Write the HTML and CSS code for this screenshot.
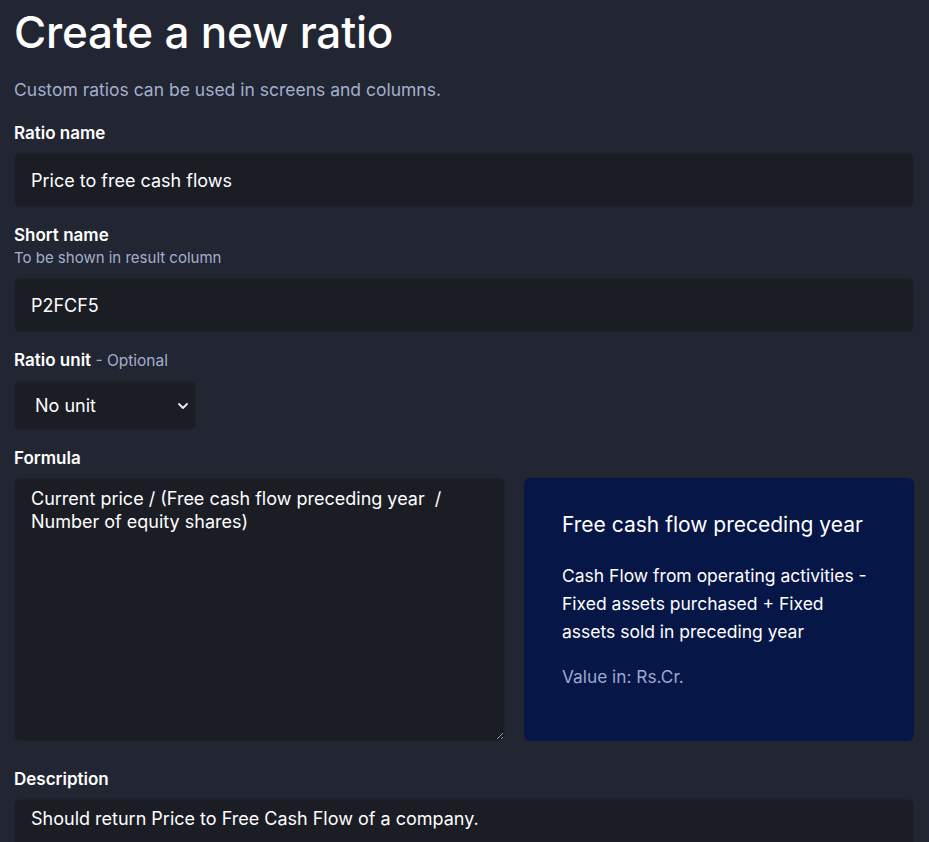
FILE: index.html
```html
<!DOCTYPE html>
<html lang="en">
<head>
<meta charset="utf-8">
<title>Create a new ratio</title>
<link rel="stylesheet" href="styles.css">
</head>
<body>
<main class="page">
  <h1 class="title">Create a new ratio</h1>
  <p class="subtitle">Custom ratios can be used in screens and columns.</p>

  <div class="field first">
    <label class="label" for="rname">Ratio name</label>
    <input class="input" id="rname" type="text" value="Price to free cash flows">
  </div>

  <div class="field">
    <label class="label" for="sname">Short name</label>
    <div class="help">To be shown in result column</div>
    <input class="input" id="sname" type="text" value="P2FCF5">
  </div>

  <div class="field">
    <label class="label" for="unit">Ratio unit <span class="optional">- Optional</span></label>
    <div class="select" id="unit">
      <span class="select-value">No unit</span>
      <svg class="chevron" width="10" height="6" viewBox="0 0 10 6"><path d="M1 1l4 4 4-4" fill="none" stroke="#e8eaf0" stroke-width="1.8" stroke-linecap="round" stroke-linejoin="round"/></svg>
    </div>
  </div>

  <div class="field">
    <label class="label" for="formula">Formula</label>
    <div class="formula-row">
      <textarea class="textarea" id="formula">Current price / (Free cash flow preceding year  /
Number of equity shares)</textarea>
      <aside class="card">
        <h2 class="card-title">Free cash flow preceding year</h2>
        <p class="card-text">Cash Flow from operating activities - Fixed assets purchased + Fixed assets sold in preceding year</p>
        <p class="card-unit">Value in: Rs.Cr.</p>
      </aside>
    </div>
  </div>

  <div class="field desc-field">
    <label class="label" for="desc">Description</label>
    <div class="desc" id="desc">Should return Price to Free Cash Flow of a company.</div>
  </div>
</main>
</body>
</html>
```
FILE: styles.css
```css
* { box-sizing: border-box; }
html, body {
  margin: 0;
  background: #222532;
  height: 100%;
  overflow: hidden;
}
body {
  font-family: Inter, "Noto Sans", sans-serif;
  color: #ffffff;
}
.page {
  padding: 0 15px 0 14px;
}
.title {
  margin: 0;
  padding-top: 5px;
  font-size: 44px;
  font-weight: 500;
  line-height: 54px;
  letter-spacing: -0.2px;
}
.subtitle {
  margin: 20px 0 0;
  font-size: 17.5px;
  line-height: 22px;
  color: #a4afcf;
}
.field {
  margin-top: 16px;
}
.field.first { margin-top: 20px; }
.field.desc-field { margin-top: 26px; }
.label {
  display: block;
  font-size: 17px;
  font-weight: 600;
  line-height: 24px;
  margin-bottom: 8px;
}
.help {
  font-size: 15px;
  color: #a4afcf;
  line-height: 20px;
  margin-top: -7px;
  margin-bottom: 10px;
}
.optional {
  font-weight: 400;
  font-size: 15.5px;
  color: #a4afcf;
}
.input {
  display: block;
  width: 100%;
  height: 54px;
  background: #1b1d25;
  border: 1px solid #1f222b;
  border-radius: 6px;
  color: #ffffff;
  font-family: inherit;
  font-size: 18px;
  padding: 0 16px;
  outline: none;
}
.desc {
  height: 60px;
  background: #1b1d25;
  border: 1px solid #1f222b;
  border-radius: 6px 6px 0 0;
  font-size: 18px;
  line-height: 23px;
  padding: 7px 16px;
}
.select {
  width: 182px;
  height: 49px;
  background: #1b1d25;
  border: 1px solid #1f222b;
  border-radius: 6px;
  display: flex;
  align-items: center;
  justify-content: space-between;
  padding: 0 7px 0 20px;
  font-size: 18px;
}
.chevron { display: block; }
.formula-row {
  display: grid;
  grid-template-columns: 491fr 390fr;
  gap: 19px;
}
.textarea {
  display: block;
  height: 263px;
  background: #1b1d25;
  border: 1px solid #1f222b;
  border-radius: 6px;
  color: #ffffff;
  font-family: inherit;
  font-size: 18px;
  line-height: 23px;
  padding: 8px 16px;
  resize: vertical;
  outline: none;
}
.card {
  background: #061647;
  border-radius: 6px;
  padding: 33px 40px 33px 38px;
}
.card-title {
  margin: 0;
  font-size: 21px;
  font-weight: 400;
  line-height: 28px;
}
.card-text {
  margin: 23px 0 0;
  font-size: 17.5px;
  line-height: 28px;
}
.card-unit {
  margin: 20px 0 0;
  font-size: 17.3px;
  line-height: 22px;
  color: #9ca9cc;
}
```
